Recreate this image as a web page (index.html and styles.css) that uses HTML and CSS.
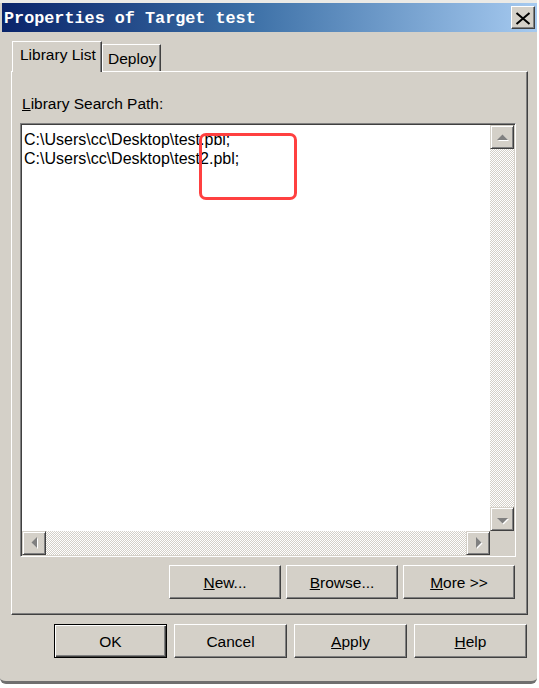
FILE: index.html
```html
<!DOCTYPE html>
<html>
<head>
<meta charset="utf-8">
<link rel="stylesheet" href="styles.css">
</head>
<body>
<div class="window">
  <div class="titlebar">
    <span class="title">Properties of Target test</span>
    <button class="close" aria-label="Close">
      <svg width="24" height="23" viewBox="0 0 24 23"><path d="M5.5 7 L18.5 18 M18.5 7 L5.5 18" stroke="#000" stroke-width="2" fill="none"/></svg>
    </button>
  </div>
  <div class="content">
    <div class="tabs">
      <div class="tab active">Library List</div>
      <div class="tab">Deploy</div>
    </div>
    <div class="panel">
      <div class="label"><u>L</u>ibrary Search Path:</div>
      <div class="listbox">
        <div class="list-text">
          <div>C:\Users\cc\Desktop\test.pbl;</div>
          <div>C:\Users\cc\Desktop\test2.pbl;</div>
        </div>
        <div class="vscroll">
          <div class="sbtn"><svg width="22" height="22" viewBox="0 0 22 22"><polygon points="6,14 17,14 11.5,8.5" fill="#fff" transform="translate(1,1)"/><polygon points="6,14 17,14 11.5,8.5" fill="#808080"/></svg></div>
          <div class="track"></div>
          <div class="sbtn"><svg width="22" height="22" viewBox="0 0 22 22"><polygon points="6,10 17,10 11.5,15.5" fill="#fff" transform="translate(1,1)"/><polygon points="6,10 17,10 11.5,15.5" fill="#808080"/></svg></div>
        </div>
        <div class="hscroll">
          <div class="sbtn"><svg width="22" height="22" viewBox="0 0 22 22"><polygon points="14,5 14,16 8.5,10.5" fill="#fff" transform="translate(1,1)"/><polygon points="14,5 14,16 8.5,10.5" fill="#808080"/></svg></div>
          <div class="track"></div>
          <div class="sbtn"><svg width="22" height="22" viewBox="0 0 22 22"><polygon points="9,5 9,16 14.5,10.5" fill="#fff" transform="translate(1,1)"/><polygon points="9,5 9,16 14.5,10.5" fill="#808080"/></svg></div>
        </div>
        <div class="corner"></div>
        <div class="annotation"></div>
      </div>
      <div class="panel-buttons">
        <button class="btn"><u>N</u>ew...</button>
        <button class="btn"><u>B</u>rowse...</button>
        <button class="btn"><u>M</u>ore &gt;&gt;</button>
      </div>
    </div>
    <div class="dialog-buttons">
      <button class="btn default">OK</button>
      <button class="btn">Cancel</button>
      <button class="btn"><u>A</u>pply</button>
      <button class="btn"><u>H</u>elp</button>
    </div>
  </div>
</div>
</body>
</html>
```
FILE: styles.css
```css
html, body {
  margin: 0;
  padding: 0;
  background: #ffffff;
}
body {
  font-family: "Liberation Sans", Arial, sans-serif;
  font-size: 15.5px;
  color: #000;
}
.window {
  width: 537px;
  box-sizing: border-box;
  background: #d4d0c8;
  border-top: 3px solid #ebeae6;
  border-bottom: 3px solid #6f6f6f;
  border-radius: 0 0 6px 6px;
  padding-bottom: 23px;
}
.titlebar {
  height: 29px;
  margin-left: 2px;
  display: flex;
  align-items: center;
  background: linear-gradient(to right, #0a246a 0%, #3a6ea5 45%, #a6caf0 100%);
}
.title {
  font-family: "Liberation Mono", "Courier New", monospace;
  font-weight: bold;
  font-size: 16.8px;
  color: #ffffff;
  padding-left: 2px;
  padding-top: 2px;
  white-space: nowrap;
}
.close {
  margin-left: auto;
  margin-right: 2px;
  width: 24px;
  height: 23px;
  padding: 0;
  background: #d4d0c8;
  border: 1px solid;
  border-color: #ffffff #404040 #404040 #ffffff;
  box-shadow: inset -1px -1px #808080;
  display: flex;
  align-items: center;
  justify-content: center;
}
.close svg { display: block; margin: -1px; }
.content {
  padding: 10px 9px 0 11px;
}
.tabs {
  display: flex;
  align-items: flex-end;
  height: 29px;
  padding-left: 1px;
}
.tab {
  box-sizing: border-box;
  height: 27px;
  border-top: 1px solid #ffffff;
  border-left: 1px solid #ffffff;
  border-right: 1px solid #404040;
  box-shadow: inset -1px 0 #808080;
  padding: 5px 6px 0 5px;
  line-height: 18px;
  background: #d4d0c8;
  width: 59px;
}
.tab.active {
  height: 31px;
  width: 90px;
  margin-bottom: -1px;
  position: relative;
  z-index: 1;
  padding: 4px 0 0 7px;
}
.panel {
  box-sizing: border-box;
  border-top: 1px solid #ffffff;
  border-left: 1px solid #ffffff;
  border-right: 1px solid #404040;
  border-bottom: 1px solid #404040;
  box-shadow: inset -1px -1px #808080;
  padding: 23px 11px 15px 8px;
}
.label {
  line-height: 18px;
  margin-left: 2px;
}
.listbox {
  position: relative;
  margin-top: 10px;
  height: 434px;
  box-sizing: border-box;
  border: 1px solid;
  border-color: #808080 #ffffff #ffffff #808080;
  box-shadow: inset 1px 1px #404040, inset -1px -1px #d4d0c8;
  padding: 1px;
  display: grid;
  grid-template-columns: 1fr 24px;
  grid-template-rows: 1fr 24px;
  background: #ffffff;
}
.list-text {
  font-size: 16px;
  line-height: 19px;
  padding: 5px 0 0 2px;
  background: #ffffff;
  overflow: hidden;
  white-space: nowrap;
}
.vscroll {
  display: flex;
  flex-direction: column;
}
.hscroll {
  display: flex;
}
.track {
  flex: 1;
  background-color: #d4d0c8;
  background-image: conic-gradient(#ffffff 25%, #d4d0c8 0 50%, #ffffff 0 75%, #d4d0c8 0);
  background-size: 2px 2px;
}
.sbtn {
  width: 24px;
  height: 24px;
  box-sizing: border-box;
  background: #d4d0c8;
  border: 1px solid;
  border-color: #d4d0c8 #404040 #404040 #d4d0c8;
  box-shadow: inset 1px 1px #ffffff, inset -1px -1px #808080;
}
.sbtn svg { display: block; }
.corner {
  background: #d4d0c8;
}
.annotation {
  position: absolute;
  left: 178px;
  top: 9px;
  width: 98px;
  height: 67px;
  box-sizing: border-box;
  border: 3px solid #ff4040;
  border-radius: 7px;
}
.panel-buttons {
  display: flex;
  justify-content: flex-end;
  gap: 5px;
  margin-top: 8px;
  padding-right: 1px;
}
.btn {
  box-sizing: border-box;
  width: 112px;
  height: 34px;
  font-family: "Liberation Sans", Arial, sans-serif;
  font-size: 15.5px;
  color: #000;
  background: #d4d0c8;
  border: 1px solid;
  border-color: #ffffff #404040 #404040 #ffffff;
  box-shadow: inset -1px -1px #808080;
  padding: 1px 0 0 0;
}
.dialog-buttons {
  display: flex;
  justify-content: flex-end;
  gap: 7px;
  margin-top: 9px;
  padding-right: 1px;
}
.dialog-buttons .btn {
  width: 113px;
}
.btn.default {
  border-color: #000000;
  box-shadow: inset 1px 1px #ffffff, inset -1px -1px #404040, inset -2px -2px #808080;
}
```
